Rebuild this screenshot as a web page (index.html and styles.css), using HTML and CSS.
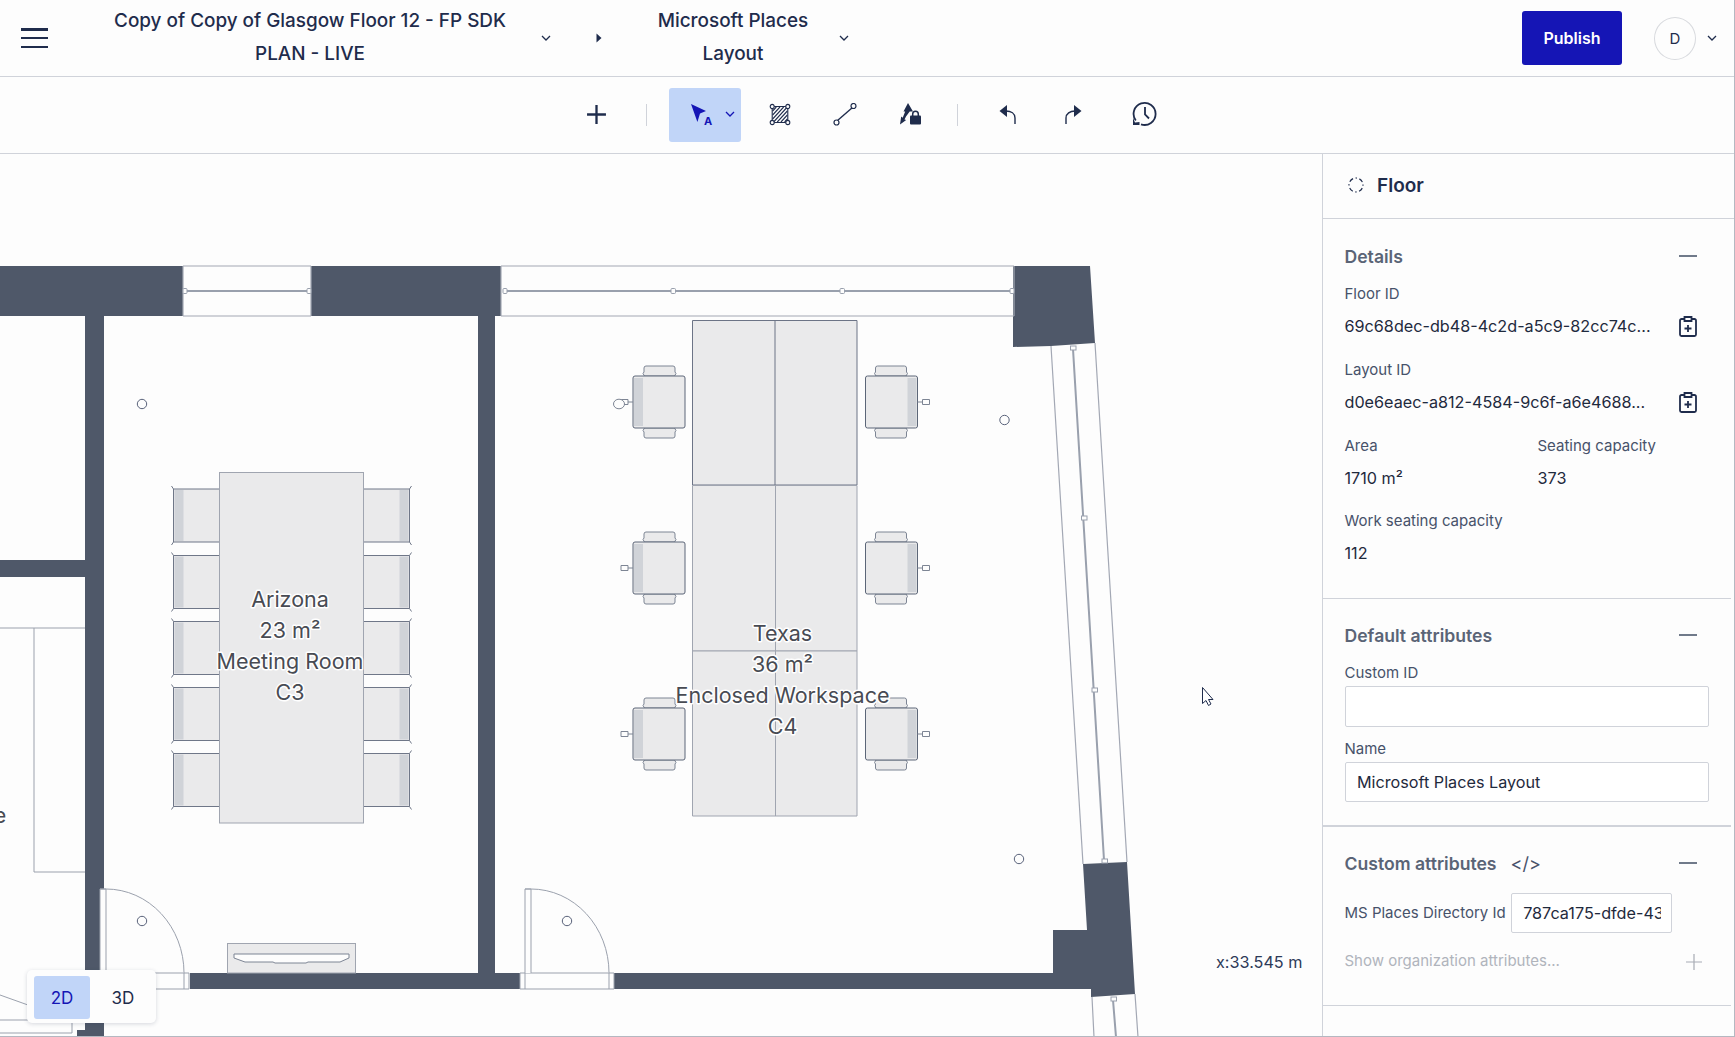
FILE: index.html
```html
<!DOCTYPE html>
<html lang="en">
<head>
<meta charset="utf-8">
<title>Floor editor</title>
<link rel="stylesheet" href="styles.css">
</head>
<body>
<div class="app">
  <header class="topbar">
    <button class="menu" aria-label="Menu"><span></span><span></span><span></span></button>
    <div class="crumb crumb-floor">Copy of Copy of Glasgow Floor 12 - FP SDK<br>PLAN - LIVE</div>
    <svg class="chev chev-a" viewBox="0 0 10 6"><path d="M1 1l4 4 4-4"/></svg>
    <svg class="caret" viewBox="0 0 6 10"><path d="M0.5 0.5L5.5 5 0.5 9.5z"/></svg>
    <div class="crumb crumb-layout">Microsoft Places<br>Layout</div>
    <svg class="chev chev-b" viewBox="0 0 10 6"><path d="M1 1l4 4 4-4"/></svg>
    <button class="publish">Publish</button>
    <div class="avatar">D</div>
    <svg class="chev chev-c" viewBox="0 0 10 6"><path d="M1 1l4 4 4-4"/></svg>
  </header>

  <nav class="toolbar">
    <svg class="tool t-plus" viewBox="0 0 20 20"><path d="M10 1v18M1 10h18"/></svg>
    <i class="sep sep-a"></i>
    <div class="tool-active">
      <svg class="t-select" viewBox="0 0 23 22">
        <path class="fill-blue" d="M1 0l15 7-6 2.600-2.600 8.400z"/>
        <text class="select-a" x="14" y="21">A</text>
      </svg>
      <svg class="chev chev-blue" viewBox="0 0 10 6"><path d="M1 1l4 4 4-4"/></svg>
    </div>
    <svg class="tool t-poly" viewBox="0 0 24 23" preserveAspectRatio="none">
      <path class="hatch-box" d="M3.500 3.500h17v16h-17z"/>
      <path class="thin" d="M4 8l4-4M4 12l8-8M4 16l12-12M5 19l15-15M9 19l11-11M13 19l7-7M17 19l3-3"/>
      <circle class="node" cx="3.500" cy="3.500" r="2.200"/><circle class="node" cx="20.500" cy="3.500" r="2.200"/>
      <circle class="node" cx="3.500" cy="19.500" r="2.200"/><circle class="node" cx="20.500" cy="19.500" r="2.200"/>
    </svg>
    <svg class="tool t-line" viewBox="0 0 24 23">
      <path d="M4.500 17.500L19.500 4.500"/>
      <circle class="node" cx="3.500" cy="19.500" r="2.500"/><circle class="node" cx="20.500" cy="3" r="2.500"/>
    </svg>
    <svg class="tool t-lock" viewBox="0 0 23 22">
      <path class="fill-navy" d="M9 0l5 8.500h-3.300L7 13.500 5.500 16.500 7.200 17l-6.200 4.500 1.200-8 1.500 1.200 2.500-6.200H4.500z"/>
      <rect class="fill-navy" x="11" y="12.500" width="11" height="9" rx="1"/>
      <path class="lock-loop" d="M13.700 13v-2a2.800 2.800 0 015.600 0v2"/>
    </svg>
    <i class="sep sep-b"></i>
    <svg class="tool t-undo" viewBox="0 0 18 19">
      <path class="fill-navy" d="M0.500 6L8 0v12z"/>
      <path d="M7 6c5 0 9 2.500 9 7v6"/>
    </svg>
    <svg class="tool t-redo" viewBox="0 0 18 19">
      <path class="fill-navy" d="M17.500 6L10 0v12z"/>
      <path d="M11 6c-5 0-9 2.500-9 7v6"/>
    </svg>
    <svg class="tool t-history" viewBox="0 0 26 25">
      <path d="M3.800 19.500A11 11 0 1 1 9 23.300"/>
      <path class="fill-navy" d="M1 17l2 4.500 4.500-.5v3H1z"/>
      <path d="M13 6v7.500l4 4"/>
    </svg>
  </nav>

  <main class="workspace">
    <section class="canvas">
      <svg class="plan" viewBox="0 154 1322 883" preserveAspectRatio="none">
        <defs>
          <g id="seat-left">
            <path class="seat" d="M0 0h46v53H0z"/>
            <path class="seat-back" d="M1 1h9v51H1z"/>
            <path class="seat-edge" d="M46 0H0v53h46M0 0l-2-3M0 53l-2 3"/>
          </g>
          <g id="seat-right">
            <path class="seat" d="M0 0h46v53H0z"/>
            <path class="seat-back" d="M36 1h9v51h-9z"/>
            <path class="seat-edge" d="M0 0h46v53H0M46 0l2-3M46 53l2 3"/>
          </g>
          <g id="arm-pair">
            <path class="arm" d="M1.500 0L0-2.500 1-4V-8a2 2 0 0 1 2-2H30a2 2 0 0 1 2 2V-4L33-2.500 31.500 0Z"/>
            <path class="arm" d="M1.500 52L0 54.500 1 56V60a2 2 0 0 0 2 2H30a2 2 0 0 0 2-2V56L33 54.500 31.500 52Z"/>
          </g>
          <g id="chair-left">
            <use href="#arm-pair" x="10"/>
            <rect class="seat-dark" x="0" y="0" width="52" height="52" rx="2"/>
            <rect class="seat-back" x="1" y="2" width="9" height="48"/>
            <path class="seat-thin" d="M0 26h-5v-2.500h-7v5h7V26"/>
          </g>
          <g id="chair-right">
            <use href="#arm-pair" x="9"/>
            <rect class="seat-dark" x="0" y="0" width="52" height="52" rx="2"/>
            <rect class="seat-back" x="42" y="2" width="9" height="48"/>
            <path class="seat-thin" d="M52 26h5v-2.500h7v5h-7V26"/>
          </g>
          <g id="door">
            <path class="door-line" d="M0 0h94v16H0zM5 0v16M89 0v16"/>
            <path class="door-line" d="M5 0v-84h6v84M5-84h6a78 84 0 0 1 78 84"/>
          </g>
        </defs>

        <path class="wall" d="M0 266H183V316H0Z"/>
        <path class="wall" d="M0 560H85V577H0Z"/>
        <path class="wall" d="M85 316H104V1037H77V1030H85Z"/>
        <path class="wall" d="M311 266H501V316H495V973H478V316H311Z"/>
        <path class="wall" d="M190 973H520V989H190Z"/>
        <path class="wall" d="M1013 266H1090L1095 343 1051 346 1013 347ZM1083 864L1127 862 1135 994 1091 997V989H614V973H1053V930H1087Z"/>

        <path class="win" d="M183 266H311M183 316H311M183 266V316M311 266V316M501 266H1014M501 316H1014M1014 266V316M501 266V316"/>
        <path class="win-mid" d="M185 291H309M503 291H1011M1073 349L1104 860M1113 1000L1116 1037"/>
        <path class="win" d="M1051 346L1083 864M1095 343L1127 862M1092 997L1094 1037M1135 994L1138 1037"/>
        <g class="win-node">
          <rect x="183" y="288.500" width="4" height="5" rx="1"/><rect x="307" y="288.500" width="4" height="5" rx="1"/>
          <rect x="503" y="288.500" width="4" height="5" rx="1"/><rect x="671" y="288.500" width="4.500" height="5" rx="1"/>
          <rect x="840" y="288.500" width="4.500" height="5" rx="1"/><rect x="1010" y="288.500" width="4" height="5" rx="1"/>
          <rect x="1070.500" y="346" width="5.500" height="4"/><rect x="1081.500" y="516" width="5.500" height="4"/>
          <rect x="1092" y="688" width="5.500" height="4"/><rect x="1102" y="859" width="5.500" height="4"/>
          <rect x="1111" y="997" width="5.500" height="4"/>
        </g>

        <path class="room-line" d="M0 628H85M34 628V872H85"/>
        <path class="room-line" d="M0 995L28 1005M0 1020H30M0 1033H72M72 1020V1033"/>

        <use href="#door" x="95" y="973"/>
        <use href="#door" x="520" y="973"/>

        <g class="sensor">
          <circle cx="142" cy="404" r="4.700"/><circle cx="142" cy="921" r="4.700"/>
          <circle cx="567" cy="921" r="4.700"/><circle cx="1004.500" cy="420" r="4.700"/>
          <circle cx="1019" cy="859" r="4.700"/>
        </g>

        <use href="#seat-left" x="173.500" y="489"/><use href="#seat-left" x="173.500" y="555.500"/>
        <use href="#seat-left" x="173.500" y="621.500"/><use href="#seat-left" x="173.500" y="687.500"/>
        <use href="#seat-left" x="173.500" y="753.500"/>
        <use href="#seat-right" x="363.500" y="489"/><use href="#seat-right" x="363.500" y="555.500"/>
        <use href="#seat-right" x="363.500" y="621.500"/><use href="#seat-right" x="363.500" y="687.500"/>
        <use href="#seat-right" x="363.500" y="753.500"/>
        <rect class="table" x="219.500" y="472.500" width="144" height="350.500"/>

        <rect class="table" x="227.500" y="943.500" width="128" height="29.500"/>
        <path class="desk-line" d="M234 954H349V958L340 962H308L306 963H275L273 962H245L234 958Z"/>

        <path class="table-dark" d="M692.500 320.500H857V485H692.500ZM775 320.500V485"/>
        <path class="table-light" d="M692.500 485.500H857V651H692.500ZM775.500 485.500V651"/>
        <path class="table-light" d="M692.500 651H857V816H692.500ZM775.500 651V816"/>

        <use href="#chair-left" x="633" y="376"/><use href="#chair-left" x="633" y="542"/>
        <use href="#chair-left" x="633" y="708"/>
        <use href="#chair-right" x="865.500" y="376"/><use href="#chair-right" x="865.500" y="542"/>
        <use href="#chair-right" x="865.500" y="708"/>
        <ellipse class="seat-thin" cx="619" cy="404" rx="5.500" ry="4.800"/>

        <g class="room-label">
          <text x="290" y="606.500">Arizona</text>
          <text x="290" y="637.500">23 m²</text>
          <text x="290" y="668.500">Meeting Room</text>
          <text x="290" y="699.500">C3</text>
          <text x="782.500" y="640.500">Texas</text>
          <text x="782.500" y="671.500">36 m²</text>
          <text x="782.500" y="702.500">Enclosed Workspace</text>
          <text x="782.500" y="733.500">C4</text>
          <text x="0" y="823">e</text>
        </g>

        <path class="pointer" d="M1202.500 687.500V703.500L1206 700.500 1208.500 705.500 1211 704 1208.500 699.500H1213Z"/>
      </svg>
      <div class="mode-switch">
        <button class="mode mode-on">2D</button>
        <button class="mode">3D</button>
      </div>
      <div class="coord">x:33.545 m</div>
    </section>

    <aside class="panel">
      <div class="panel-head">
        <svg class="floor-icon" viewBox="0 0 16 16"><circle cx="8" cy="8" r="7" stroke-dasharray="1.500 2.500 4.500 2.500" stroke-dashoffset="0.750"/></svg>
        <h1>Floor</h1>
      </div>

      <section class="block block-details">
        <div class="block-title"><h2>Details</h2><i class="minus"></i></div>
        <div class="field field-first">
          <div class="label">Floor ID</div>
          <div class="value-row"><span class="value">69c68dec-db48-4c2d-a5c9-82cc74c...</span>
            <svg class="clip" viewBox="0 0 18 21"><path d="M5 3H2.500A1.500 1.500 0 0 0 1 4.500v14A1.500 1.500 0 0 0 2.500 20h13a1.500 1.500 0 0 0 1.500-1.500v-14A1.500 1.500 0 0 0 15.500 3H13M5.500 1h7v4h-7zM9 9v7M5.500 12.500h7"/></svg></div>
        </div>
        <div class="field">
          <div class="label">Layout ID</div>
          <div class="value-row"><span class="value">d0e6eaec-a812-4584-9c6f-a6e4688...</span>
            <svg class="clip" viewBox="0 0 18 21"><path d="M5 3H2.500A1.500 1.500 0 0 0 1 4.500v14A1.500 1.500 0 0 0 2.500 20h13a1.500 1.500 0 0 0 1.500-1.500v-14A1.500 1.500 0 0 0 15.500 3H13M5.500 1h7v4h-7zM9 9v7M5.500 12.500h7"/></svg></div>
        </div>
        <div class="pair">
          <div class="field"><div class="label">Area</div><div class="value-row"><span class="value">1710 m²</span></div></div>
          <div class="field"><div class="label">Seating capacity</div><div class="value-row"><span class="value">373</span></div></div>
        </div>
        <div class="field field-last">
          <div class="label">Work seating capacity</div>
          <div class="value-row"><span class="value">112</span></div>
        </div>
      </section>

      <section class="block block-default">
        <div class="block-title"><h2>Default attributes</h2><i class="minus"></i></div>
        <div class="label label-input">Custom ID</div>
        <div class="input input-tall"></div>
        <div class="label label-input label-name">Name</div>
        <div class="input">Microsoft Places Layout</div>
      </section>

      <section class="block block-custom">
        <div class="block-title"><h2>Custom attributes</h2><span class="code">&lt;/&gt;</span><i class="minus"></i></div>
        <div class="attr-row">
          <div class="label">MS Places Directory Id</div>
          <div class="input input-small"><span>787ca175-dfde-43</span></div>
        </div>
        <div class="show-row"><span>Show organization attributes...</span>
          <svg class="add" viewBox="0 0 16 16"><path d="M8 0v16M0 8h16"/></svg></div>
      </section>
    </aside>
  </main>
</div>
</body>
</html>
```

FILE: styles.css
```css
* { box-sizing: border-box; }
html, body { margin: 0; height: 100%; }
body { font-family: Inter, "Noto Sans", sans-serif; color: #1f2c4c; background: #fdfdfd; overflow: hidden; }
button { font: inherit; border: 0; background: none; padding: 0; color: inherit; }
h1, h2 { margin: 0; }

.app { width: 1735px; height: 1037px; display: flex; flex-direction: column; border-right: 1px solid #b4b8c1; border-bottom: 1px solid #b4b8c1; }

/* header */
.topbar { height: 77px; flex: none; display: flex; align-items: center; border-bottom: 1px solid #d0d3da; padding-left: 21px; }
.menu { width: 27px; height: 20px; display: flex; flex-direction: column; justify-content: space-between; }
.menu span { display: block; height: 2.500px; background: #1f2c4c; }
.crumb { font-size: 18.900px; font-weight: 500; line-height: 33px; text-align: center; white-space: nowrap; margin-top: -2px; }
.crumb-floor { margin-left: 66px; width: 392px; }
.crumb-layout { width: 200px; margin-left: 31px; }
.chev { fill: none; stroke: #1f2c4c; stroke-width: 1.300; width: 10px; height: 6px; flex: none; }
.chev-a { margin-left: 35px; }
.caret { width: 6px; height: 10px; margin-left: 45px; fill: #1f2c4c; flex: none; }
.chev-b { margin-left: 6px; }
.publish { margin-left: 673px; width: 100px; height: 54px; background: #1515b5; border-radius: 3px; color: #fff; font-size: 16px; font-weight: 600; flex: none; }
.avatar { margin-left: 32px; width: 42px; height: 43px; border: 1px solid #d8dade; border-radius: 50%; display: flex; align-items: center; justify-content: center; font-size: 15px; flex: none; }
.chev-c { margin-left: 11px; }

/* toolbar */
.toolbar { height: 77px; flex: none; display: flex; align-items: center; border-bottom: 1px solid #d0d3da; position: relative; padding-left: 586px; }
.tool { fill: none; stroke: #1f2c4c; stroke-width: 1.400; flex: none; margin-bottom: 2px; }
.t-plus { width: 21px; height: 21px; stroke-width: 2.200; }
.sep { width: 1px; height: 22px; background: #d0d3da; flex: none; }
.sep-a { margin-left: 39px; }
.tool-active { margin-left: 22px; width: 72px; height: 54px; background: #c1d5f8; border-radius: 3px; display: flex; align-items: center; padding-left: 21px; flex: none; }
.t-select { width: 23px; height: 22px; overflow: visible; }
.fill-blue { fill: #1515b5; stroke: none; }
.select-a { fill: #1515b5; font-size: 11px; font-weight: 700; }
.chev-blue { stroke: #1515b5; margin-left: 12px; margin-bottom: 2px; }
.t-poly { width: 22px; height: 23px; margin-left: 28px; }
.thin { stroke-width: 1.100; }
.hatch-box { stroke-width: 1.200; }
.node { fill: #fdfdfd; stroke-width: 1.200; }
.t-line { width: 24px; height: 23px; margin-left: 42px; }
.t-lock { width: 23px; height: 22px; margin-left: 42px; }
.fill-navy { fill: #1f2c4c; stroke: none; }
.lock-loop { stroke-width: 1.500; }
.sep-b { margin-left: 35px; }
.t-undo { width: 18px; height: 19px; margin-left: 41px; }
.t-redo { width: 18px; height: 19px; margin-left: 47px; }
.t-history { width: 26px; height: 25px; margin-left: 50px; stroke-width: 1.800; margin-bottom: 4px; }

/* workspace */
.workspace { flex: 1; min-height: 0; display: flex; }
.canvas { width: 1322px; flex: none; position: relative; overflow: hidden; }
.plan { position: absolute; inset: 0; width: 1322px; height: 883px; }
.wall { fill: #4f5869; }
.win { fill: none; stroke: #a3a8b4; stroke-width: 1.200; }
.win-mid { fill: none; stroke: #99a0ad; stroke-width: 2; }
.win-node rect { fill: #fdfdfd; stroke: #99a0ad; stroke-width: 1; }
.room-line { fill: none; stroke: #9ba1ad; stroke-width: 1; }
.door-line { fill: #fdfdfd; stroke: #9ba1ad; stroke-width: 1; }
.sensor circle { fill: #fdfdfd; stroke: #59627a; stroke-width: 1; }
.seat { fill: #eaeaeb; }
.seat-back { fill: #d0d3d8; }
.seat-edge { fill: none; stroke: #6f7788; stroke-width: 1; }
.seat-dark { fill: #eaeaeb; stroke: #5c6678; stroke-width: 1; }
.arm { fill: #eaeaeb; stroke: #7d8594; stroke-width: 1; }
.seat-thin { fill: #fdfdfd; stroke: #7d8594; stroke-width: 1; }
.table { fill: #eaeaeb; stroke: #a0a5b0; stroke-width: 1; }
.table-dark { fill: #eaeaeb; stroke: #6c7486; stroke-width: 1; }
.table-light { fill: #eaeaeb; stroke: #a0a5b0; stroke-width: 1; }
.desk-line { fill: #fdfdfd; stroke: #7d8594; stroke-width: 1; }
.room-label text { font-size: 21.500px; fill: #484b53; text-anchor: middle; paint-order: stroke; stroke: #fff; stroke-width: 3px; stroke-linejoin: round; }
.pointer { fill: #fff; stroke: #1f2c4c; stroke-width: 1; }

.mode-switch { position: absolute; left: 27px; top: 816px; width: 129px; height: 53px; background: #fdfdfd; border-radius: 5px; box-shadow: 0 1px 4px rgba(31,44,76,.18); display: flex; padding: 6px 7px; }
.mode { width: 56px; height: 43px; border-radius: 3px; font-size: 17px; flex: none; }
.mode-on { background: #c1d5f8; color: #1515b5; }
.mode + .mode { margin-left: 5px; }
.coord { position: absolute; left: 1216px; top: 798px; font-size: 16.200px; line-height: 20px; color: #2d3a58; white-space: nowrap; }

/* panel */
.panel { width: 412px; flex: none; border-left: 1px solid #d0d3da; color: #2b3548; }
.panel-head { height: 65px; display: flex; align-items: center; padding-left: 25px; padding-bottom: 2px; border-bottom: 1px solid #d0d3da; }
.floor-icon { width: 16px; height: 16px; fill: none; stroke: #1f2c4c; stroke-width: 1.200; flex: none; }
.panel-head h1 { font-size: 19px; font-weight: 600; margin-left: 13px; color: #1f2c4c; }
.block { padding: 0 26px 0 21.500px; margin-right: 3px; border-bottom: 1px solid #d0d3da; }
.block-details { padding-top: 25px; height: 380px; }
.block-default { padding-top: 24px; height: 228px; border-bottom-width: 2px; }
.block-custom { padding-top: 24px; height: 179px; }
.block-title { height: 24px; display: flex; align-items: center; padding-right: 8.500px; margin-bottom: 1px; }
.block-title h2 { font-size: 17.600px; font-weight: 600; color: #5a6476; white-space: nowrap; }
.minus { display: block; width: 18px; height: 2px; background: #707a8a; margin-left: auto; }
.label { font-size: 15px; line-height: 20px; color: #47526a; white-space: nowrap; }
.field { margin-bottom: 22px; }
.field-first { margin-top: 16px; }
.field-last { margin-bottom: 0; }
.value-row { display: flex; align-items: center; justify-content: space-between; height: 24px; margin-top: 10px; padding-right: 8.500px; }
.value { font-size: 16.200px; line-height: 24px; color: #1f2a3d; white-space: nowrap; }
.clip { width: 18px; height: 21px; fill: none; stroke: #1f2c4c; stroke-width: 1.800; flex: none; }
.pair { display: flex; }
.pair .field { flex: none; width: 193px; margin-bottom: 21px; }
.label-input { margin-top: 16px; }
.label-name { margin-top: 12px; }
.input { height: 40px; width: 364px; border: 1px solid #d0d3da; border-radius: 2px; font-size: 16.200px; line-height: 38px; padding-left: 11px; color: #1f2a3d; background: #fff; margin-top: 3px; margin-left: 0.500px; white-space: nowrap; }
.input-tall { height: 41px; }
.code { font-size: 18px; margin-left: 14px; color: #47526a; }
.attr-row { display: flex; align-items: center; margin-top: 18px; gap: 5.500px; }
.input-small { width: 161px; margin-top: 0; margin-left: 0; flex: none; }
.input-small span { display: block; width: 138px; overflow: hidden; }
.show-row { display: flex; align-items: center; justify-content: space-between; height: 22px; margin-top: 16px; font-size: 15px; color: #b0b4bc; padding-right: 3.500px; }
.add { width: 16px; height: 16px; fill: none; stroke: #a8acb5; stroke-width: 1.200; margin-top: 3px; }
```
